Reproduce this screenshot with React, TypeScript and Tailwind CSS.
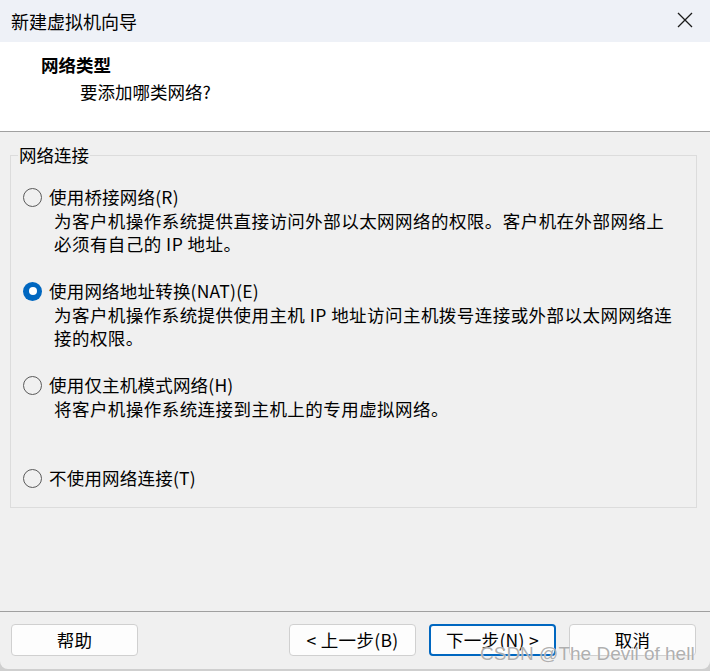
import React from "react";

const FONT = { fontFamily: '"Segoe UI", "Noto Sans CJK SC", "Noto Sans", sans-serif' };

function Radio({ checked }: { checked?: boolean }) {
  if (checked) {
    return (
      <span className="flex h-[19px] w-[19px] shrink-0 items-center justify-center rounded-full bg-[#0067c0]">
        <span className="h-[8px] w-[8px] rounded-full bg-white" />
      </span>
    );
  }
  return <span className="h-[19px] w-[19px] shrink-0 rounded-full border border-[#5a5a5a]" />;
}

function Option({
  label,
  desc,
  checked,
  className = "",
}: {
  label: string;
  desc?: string[];
  checked?: boolean;
  className?: string;
}) {
  return (
    <div className={className}>
      <div className="flex h-[24px] items-center gap-[7px]">
        <Radio checked={checked} />
        <span className="leading-[24px] tracking-[0.2px] text-black">{label}</span>
      </div>
      {desc && (
        <div className="ml-[31px]">
          {desc.map((d, i) => (
            <div key={i} className="leading-[23px] tracking-[0.45px] text-black whitespace-nowrap">
              {d}
            </div>
          ))}
        </div>
      )}
    </div>
  );
}

function Btn({ children, primary }: { children: React.ReactNode; primary?: boolean }) {
  return (
    <div
      className={
        "flex h-[32px] w-[127px] items-center justify-center rounded-[4px] bg-[#fdfdfd] text-[17.5px] tracking-[0.3px] text-black " +
        (primary ? "border-2 border-[#0067c0]" : "border border-[#d0d0d0]")
      }
    >
      {children}
    </div>
  );
}

export default function App() {
  return (
    <div className="relative h-[671px] w-[710px] overflow-hidden bg-[#cfcfcf]" style={FONT}>
      <div className="flex h-[669px] w-[710px] flex-col overflow-hidden rounded-b-[8px] bg-[#f0f0f0] text-[17.5px]">
        {/* title bar */}
        <div className="flex h-[42px] shrink-0 items-center justify-between bg-[#eef1f7] pl-[11px] pr-[17px]">
          <span className="text-[18px] text-black">新建虚拟机向导</span>
          <svg width="16" height="16" viewBox="0 0 16 16" className="mt-[-2px]">
            <path d="M1 1 L15 15 M15 1 L1 15" stroke="#1a1a1a" strokeWidth="1.3" fill="none" />
          </svg>
        </div>
        {/* header */}
        <div className="h-[90px] shrink-0 border-b border-[#a0a0a0] bg-white pt-[11px]">
          <div className="pl-[41px] font-bold leading-[24px] text-black">网络类型</div>
          <div className="mt-[3px] pl-[80px] leading-[24px] text-black">要添加哪类网络?</div>
        </div>
        {/* body */}
        <div className="flex-1 pt-[11px]">
          <fieldset className="mx-[10px] w-[687px] border border-[#dcdcdc] pb-[17px] pt-[18px]">
            <legend className="ml-[7px] px-[1px] leading-[24px] text-black">网络连接</legend>
            <div className="pl-[12px]">
              <Option
                label="使用桥接网络(R)"
                desc={["为客户机操作系统提供直接访问外部以太网网络的权限。客户机在外部网络上", "必须有自己的 IP 地址。"]}
              />
              <Option
                className="mt-[24px]"
                checked
                label="使用网络地址转换(NAT)(E)"
                desc={["为客户机操作系统提供使用主机 IP 地址访问主机拨号连接或外部以太网网络连", "接的权限。"]}
              />
              <Option
                className="mt-[24px]"
                label="使用仅主机模式网络(H)"
                desc={["将客户机操作系统连接到主机上的专用虚拟网络。"]}
              />
              <Option className="mt-[46px]" label="不使用网络连接(T)" />
            </div>
          </fieldset>
        </div>
        {/* footer */}
        <div className="flex h-[58px] shrink-0 items-start justify-between border-t border-[#a0a0a0] pl-[11px] pr-[14px] pt-[12px]">
          <Btn>帮助</Btn>
          <div className="flex gap-[13px]">
            <Btn>&lt; 上一步(B)</Btn>
            <Btn primary>下一步(N) &gt;</Btn>
            <Btn>取消</Btn>
          </div>
        </div>
      </div>
      <div
        className="pointer-events-none absolute left-[480px] top-[642px] text-[19px] leading-[24px] text-[#9a9a9a]/80 whitespace-nowrap"
        style={{ fontFamily: '"Liberation Sans", Arial, sans-serif', textShadow: "0 0 1px #ffffff" }}
      >
        CSDN @The Devil of hell
      </div>
    </div>
  );
}
